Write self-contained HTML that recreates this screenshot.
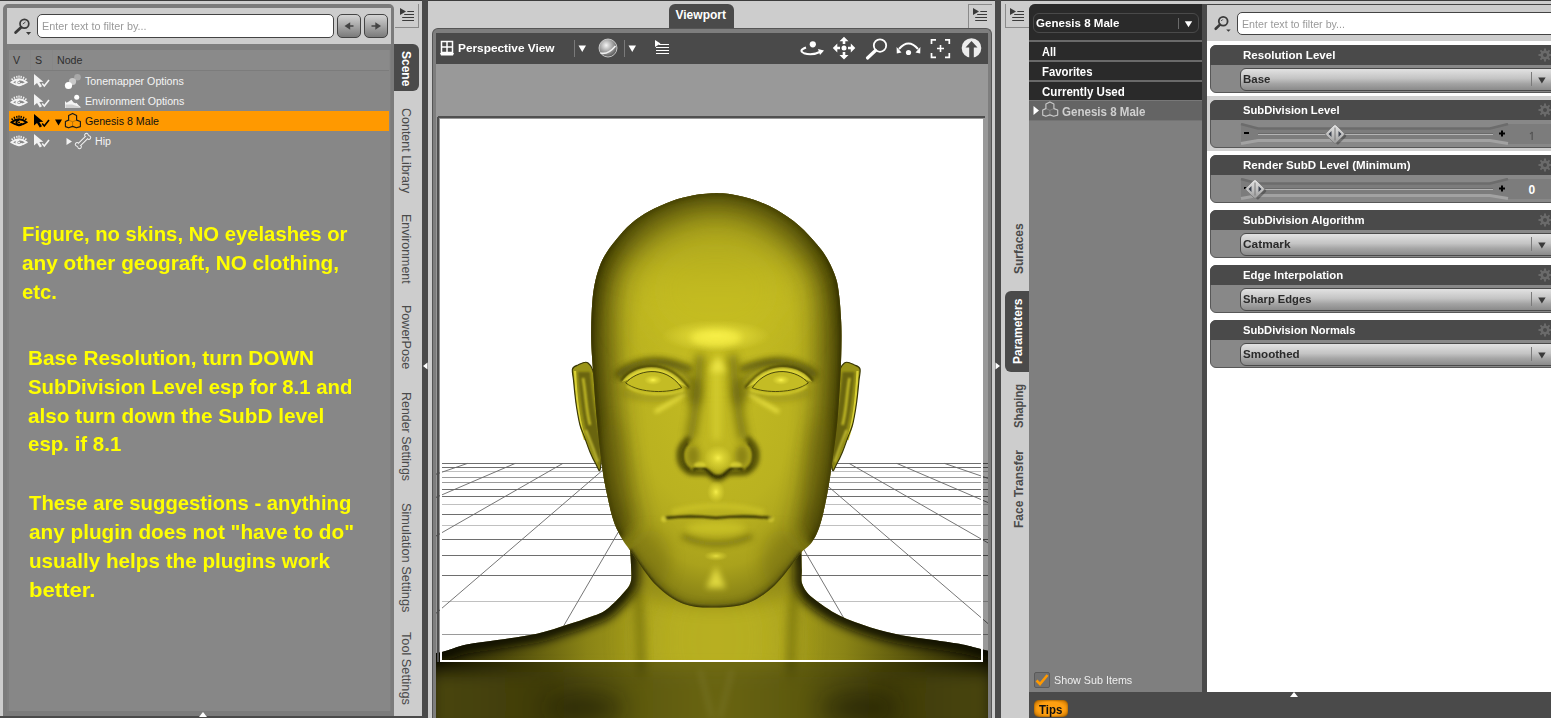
<!DOCTYPE html>
<html><head><meta charset="utf-8">
<style>
*{margin:0;padding:0;box-sizing:border-box}
html,body{width:1551px;height:718px;overflow:hidden;background:#cdcdcd;font-family:"Liberation Sans",sans-serif;position:relative}
.a{position:absolute}
.vt{position:absolute;transform-origin:0 0;white-space:nowrap;font-size:12px;line-height:12px;color:#4a4a4a}
</style></head><body>
<div class="a" style="left:0;top:0;width:1551px;height:1px;background:#3c3c3c"></div>
<div class="a" style="left:422px;top:0;width:6px;height:718px;background:#4a4a4a"></div>
<div class="a" style="left:995px;top:0;width:6px;height:718px;background:#4a4a4a"></div>
<div class="a" style="left:0;top:716px;width:422px;height:2px;background:#4a4a4a"></div>
<!-- LEFT PANEL -->
<div class="a" style="left:3px;top:4px;width:391px;height:712px;background:#7b7b7b;border-radius:5px 5px 0 0"></div>
<div class="a" style="left:7px;top:8px;width:384px;height:36px;background:#cdcdcd"></div>
<div class="a" style="left:7px;top:44px;width:384px;height:667px;background:#7f7f7f"></div>
<div class="a" style="left:9px;top:50px;width:380.5px;height:661px;background:#878787"></div>
<!-- search icon -->
<svg class="a" style="left:8px;top:10px" width="30" height="30" viewBox="8 10 30 30">
 <circle cx="24.4" cy="23.7" r="4.4" fill="none" stroke="#3a3a3a" stroke-width="1.7"/>
 <path d="M25.5 22 L22.8 24" stroke="#3a3a3a" stroke-width="0.9"/>
 <path d="M21.2 27.3 L15.6 32.6" stroke="#3a3a3a" stroke-width="2.8" stroke-linecap="round"/>
 <path d="M26 32 L31.1 32 L28.55 35 Z" fill="#3a3a3a"/>
</svg>
<div class="a" style="left:37px;top:14px;width:297px;height:24px;background:#fff;border:1px solid #444;border-radius:5px"></div>
<div class="a" style="left:42px;top:20.5px;font-size:11px;line-height:11px;color:#9a9a9a;white-space:nowrap;transform:scaleX(0.985);transform-origin:0 0">Enter text to filter by...</div>
<div class="a" style="left:337px;top:14px;width:24px;height:24px;border:1px solid #444;border-radius:5px;background:linear-gradient(#d4d4d4,#7a7a7a)"></div>
<div class="a" style="left:364px;top:14px;width:24px;height:24px;border:1px solid #444;border-radius:5px;background:linear-gradient(#d4d4d4,#7a7a7a)"></div>
<svg class="a" style="left:337px;top:14px" width="51" height="24" viewBox="0 0 51 24">
 <path d="M7.5 12 L13.2 8.3 L13.2 15.7 Z" fill="#444"/><path d="M12 12 H16.5" stroke="#444" stroke-width="1.5"/>
 <path d="M44 12 L38.3 8.3 L38.3 15.7 Z" fill="#444"/><path d="M34.5 12 H39" stroke="#444" stroke-width="1.5"/>
</svg>
<!-- header -->
<div class="a" style="left:9px;top:50px;width:21px;height:20px;background:#8a8a8a"></div>
<div class="a" style="left:31px;top:50px;width:21px;height:20px;background:#8a8a8a"></div>
<div class="a" style="left:53px;top:50px;width:336px;height:20px;background:#8a8a8a"></div>
<div class="a" style="left:9px;top:70px;width:380px;height:1px;background:#7c7c7c"></div>
<div class="a" style="left:13px;top:54px;font-size:10.65px;color:#2e2e2e">V</div>
<div class="a" style="left:35px;top:54px;font-size:10.65px;color:#2e2e2e">S</div>
<div class="a" style="left:57px;top:54px;font-size:10.65px;color:#2e2e2e">Node</div>
<!-- selected row -->
<div class="a" style="left:9px;top:111px;width:380px;height:20px;background:#ff9900"></div>
<!-- rows text -->
<div class="a" style="left:85px;top:75px;font-size:10.65px;color:#f4f4f4;white-space:nowrap">Tonemapper Options</div>
<div class="a" style="left:85px;top:95px;font-size:10.65px;color:#f4f4f4;white-space:nowrap">Environment Options</div>
<div class="a" style="left:85px;top:115px;font-size:10.65px;color:#111;white-space:nowrap">Genesis 8 Male</div>
<div class="a" style="left:95px;top:135px;font-size:10.65px;color:#f4f4f4;white-space:nowrap">Hip</div>
<!-- icons -->
<svg class="a" style="left:0;top:70px" width="100" height="82" viewBox="0 70 100 82">
 <defs>
  <g id="eye">
   <path d="M0.5 8.8 Q8 2.8 15.5 8.8 Q8 14.2 0.5 8.8 Z" fill="none" stroke="currentColor" stroke-width="1.9"/>
   <path d="M8.3 6.6 A2.6 2.6 0 1 0 10.6 9.6" fill="none" stroke="currentColor" stroke-width="2"/>
   <circle cx="8" cy="8.9" r="1" fill="currentColor"/>
   <path d="M1.8 6.6 L0.6 5 M3.8 5.2 L3 3.2 M6 4.4 L5.7 2.3 M8 4.2 V2 M10 4.4 L10.3 2.3 M12.2 5.2 L13 3.2 M14.2 6.6 L15.4 5" stroke="currentColor" stroke-width="1.3"/>
  </g>
  <g id="cur">
   <path d="M0 0 L0 11.5 L3 9 L5.8 13.5 L8 12.3 L5.3 8 L9.3 7.8 Z" fill="currentColor"/>
   <path d="M8.2 9.5 L10.3 12 L15 6" fill="none" stroke="currentColor" stroke-width="1.6"/>
  </g>
 </defs>
 <g color="#f2f2f2"><use href="#eye" x="11" y="73.5"/><use href="#cur" x="34" y="74"/></g>
 <g color="#f2f2f2"><use href="#eye" x="11" y="93.5"/><use href="#cur" x="34" y="94"/></g>
 <g color="#000"><use href="#eye" x="11" y="113.5"/><use href="#cur" x="34" y="114"/></g>
 <g color="#f2f2f2"><use href="#eye" x="11" y="133.5"/><use href="#cur" x="34" y="134"/></g>
 <!-- tonemapper -->
 <circle cx="77.5" cy="77.3" r="3.3" fill="#a8a8a8"/><circle cx="72.5" cy="81.5" r="3.6" fill="#c8c8c8"/><circle cx="68.5" cy="85.5" r="3.6" fill="#fff"/>
 <!-- environment -->
 <path d="M65 101 L66.6 102.8 L68.3 101.8 L71.4 99.7 L73.6 102.4 L75.4 103.2 L76.6 103 L78.6 105.2 L80.4 106.8 L80.4 107.9 L65 107.9 Z" fill="#f4f4f4"/>
 <path d="M65.5 104.5 H72 L75 105.5 L78 106.3 L80 107 V107.9 H65.5 Z" fill="#cfcfcf"/>
 <circle cx="76.7" cy="97.2" r="2.5" fill="#fff"/>
 <!-- triangle -->
 <path d="M55 119.5 L62 119.5 L58.5 125.5 Z" fill="#000"/>
 <!-- figure -->
 <path d="M72.6 113.4 L76.6 115.5 L76.6 120.1 L80.4 121.5 L80.4 126.6 L76.4 127.8 L72.6 126.4 L68.6 127.8 L65.4 126.6 L65.4 121.5 L68.6 120.1 L68.6 115.5 Z" fill="none" stroke="#1a1a1a" stroke-width="1.15" stroke-linejoin="round"/><path d="M68.6 120.1 L72.6 121.8 L76.6 120.1 M72.6 121.8 V126.4" fill="none" stroke="#1a1a1a" stroke-width="0.8" opacity="0.35"/>
 <!-- hip triangle -->
 <path d="M66.5 138 L72 141.5 L66.5 145 Z" fill="#f2f2f2"/>
 <!-- bone -->
 <g transform="translate(83 141) rotate(-45) scale(0.87)">
  <g fill="#f4f4f4"><rect x="-7" y="-2.4" width="14" height="4.8"/><circle cx="-7.6" cy="-2" r="2.6"/><circle cx="-7.6" cy="2" r="2.6"/><circle cx="7.6" cy="-2" r="2.6"/><circle cx="7.6" cy="2" r="2.6"/></g>
  <g fill="#878787"><rect x="-7" y="-1.3" width="14" height="2.6"/><circle cx="-7.6" cy="-2" r="1.5"/><circle cx="-7.6" cy="2" r="1.5"/><circle cx="7.6" cy="-2" r="1.5"/><circle cx="7.6" cy="2" r="1.5"/><rect x="-8.5" y="-2" width="2" height="4"/><rect x="6.5" y="-2" width="2" height="4"/></g>
 </g>
</svg>
<!-- yellow note -->
<div class="a" style="left:22.2px;top:223.12px;font-size:21px;line-height:21px;font-weight:bold;color:#ffff00;white-space:nowrap;transform:scaleX(0.9650);transform-origin:0 0">Figure, no skins, NO eyelashes or</div>
<div class="a" style="left:22.2px;top:252.12px;font-size:21px;line-height:21px;font-weight:bold;color:#ffff00;white-space:nowrap;transform:scaleX(0.9880);transform-origin:0 0">any other geograft, NO clothing,</div>
<div class="a" style="left:21.5px;top:281.22px;font-size:21px;line-height:21px;font-weight:bold;color:#ffff00;white-space:nowrap;transform:scaleX(0.9672);transform-origin:0 0">etc.</div>
<div class="a" style="left:27.5px;top:346.52px;font-size:21px;line-height:21px;font-weight:bold;color:#ffff00;white-space:nowrap;transform:scaleX(0.9888);transform-origin:0 0">Base Resolution, turn DOWN</div>
<div class="a" style="left:27.5px;top:375.62px;font-size:21px;line-height:21px;font-weight:bold;color:#ffff00;white-space:nowrap;transform:scaleX(0.9683);transform-origin:0 0">SubDivision Level esp for 8.1 and</div>
<div class="a" style="left:27.5px;top:404.72px;font-size:21px;line-height:21px;font-weight:bold;color:#ffff00;white-space:nowrap;transform:scaleX(0.9884);transform-origin:0 0">also turn down the SubD level</div>
<div class="a" style="left:27.7px;top:433.42px;font-size:21px;line-height:21px;font-weight:bold;color:#ffff00;white-space:nowrap;transform:scaleX(0.9748);transform-origin:0 0">esp. if 8.1</div>
<div class="a" style="left:28.7px;top:492.12px;font-size:21px;line-height:21px;font-weight:bold;color:#ffff00;white-space:nowrap;transform:scaleX(0.9657);transform-origin:0 0">These are suggestions - anything</div>
<div class="a" style="left:28.7px;top:521.12px;font-size:21px;line-height:21px;font-weight:bold;color:#ffff00;white-space:nowrap;transform:scaleX(0.9875);transform-origin:0 0">any plugin does not &quot;have to do&quot;</div>
<div class="a" style="left:28.7px;top:550.12px;font-size:21px;line-height:21px;font-weight:bold;color:#ffff00;white-space:nowrap;transform:scaleX(0.9842);transform-origin:0 0">usually helps the plugins work</div>
<div class="a" style="left:29.1px;top:579.22px;font-size:21px;line-height:21px;font-weight:bold;color:#ffff00;white-space:nowrap;transform:scaleX(1.0520);transform-origin:0 0">better.</div>

<!-- left tab strip menu icon -->
<div class="a" style="left:394.7px;top:4px;width:24.2px;height:24px;border-right:1px solid #8a8a8a;border-bottom:1px solid #8a8a8a"></div>
<svg class="a" style="left:398px;top:6px" width="18" height="18" viewBox="398 6 18 18"><path d="M400 8 L400 15 L406 11.5 Z" fill="#3a3a3a"/><path d="M407.3 11.5 H414 M404.2 14.5 H414 M402.2 17.5 H414 M402.2 20.5 H414" stroke="#3a3a3a" stroke-width="1.1"/></svg>
<!-- Scene tab active -->
<div class="a" style="left:394px;top:44px;width:25px;height:47px;background:#4a4a4a;border-radius:0 6px 6px 0"></div>
<div class="vt" style="left:412px;top:51px;transform:rotate(90deg);font-weight:bold;color:#fff">Scene</div>
<div class="vt" style="left:412px;top:108px;transform:rotate(90deg) scaleX(1.04);">Content Library</div>
<div class="vt" style="left:412px;top:214.4px;transform:rotate(90deg) scaleX(1.035);">Environment</div>
<div class="vt" style="left:412px;top:305px;transform:rotate(90deg) scaleX(1.045);">PowerPose</div>
<div class="vt" style="left:412px;top:392px;transform:rotate(90deg) scaleX(1.035);">Render Settings</div>
<div class="vt" style="left:412px;top:503.3px;transform:rotate(90deg) scaleX(1.065);">Simulation Settings</div>
<div class="vt" style="left:412px;top:632px;transform:rotate(90deg) scaleX(1.06);">Tool Settings</div>
<svg class="a" style="left:422px;top:360px" width="6" height="12" viewBox="0 0 6 12"><path d="M1 6 L5.5 2.5 L5.5 9.5 Z" fill="#fff"/></svg>
<svg class="a" style="left:199px;top:711px" width="8" height="6" viewBox="0 0 8 6"><path d="M0 6 L4 1 L8 6 Z" fill="#fff"/></svg>

<!-- viewport tab strip menu icon -->
<div class="a" style="left:968px;top:4px;width:24px;height:24px;border-left:1px solid #8a8a8a;border-top:1px solid #8a8a8a"></div>
<svg class="a" style="left:971px;top:6px" width="18" height="18" viewBox="971 6 18 18"><path d="M973 8 L973 15 L979 11.5 Z" fill="#3a3a3a"/><path d="M980.3 11.5 H987 M977.2 14.5 H987 M975.2 17.5 H987 M975.2 20.5 H987" stroke="#3a3a3a" stroke-width="1.1"/></svg>
<!-- Viewport tab -->
<div class="a" style="left:669px;top:4px;width:65px;height:26px;background:#4a4a4a;border-radius:6px 6px 0 0"></div>
<div class="a" style="left:675.5px;top:9px;font-size:12px;line-height:12px;font-weight:bold;color:#fff">Viewport</div>

<!-- right tab strip menu icon -->
<div class="a" style="left:1005px;top:4px;width:25px;height:24px;border-left:1px solid #8a8a8a;border-bottom:1px solid #8a8a8a"></div>
<svg class="a" style="left:1008px;top:6px" width="18" height="18" viewBox="1008 6 18 18"><path d="M1010 8 L1010 15 L1016 11.5 Z" fill="#3a3a3a"/><path d="M1017.3 11.5 H1024 M1014.2 14.5 H1024 M1012.2 17.5 H1024 M1012.2 20.5 H1024" stroke="#3a3a3a" stroke-width="1.1"/></svg>
<!-- right vertical tabs -->
<div class="a" style="left:1005px;top:290.5px;width:25px;height:81px;background:#4a4a4a;border-radius:6px 0 0 6px"></div>
<div class="vt" style="left:1013px;top:274.4px;transform:rotate(-90deg);font-weight:bold;">Surfaces</div>
<div class="vt" style="left:1012px;top:364px;transform:rotate(-90deg);font-weight:bold;color:#fff">Parameters</div>
<div class="vt" style="left:1013px;top:428px;transform:rotate(-90deg) scaleX(0.93);font-weight:bold;">Shaping</div>
<div class="vt" style="left:1013px;top:528.4px;transform:rotate(-90deg);font-weight:bold;">Face Transfer</div>
<svg class="a" style="left:995px;top:360px" width="6" height="12" viewBox="0 0 6 12"><path d="M5 6 L0.5 2.5 L0.5 9.5 Z" fill="#fff"/></svg>
<!-- VIEWPORT -->
<div class="a" style="left:432px;top:28px;width:560px;height:690px;background:#7e7e7e;border-radius:6px 6px 0 0;border:1px solid #555;border-bottom:none"></div>
<div class="a" style="left:436px;top:33px;width:552px;height:31px;background:#4a4a4a"></div>
<svg class="a" style="left:0;top:0" width="1551" height="718" viewBox="0 0 1551 718">
<defs>
 <clipPath id="vpclip"><rect x="436" y="64" width="552" height="654"/></clipPath>
 <clipPath id="hclip"><path d="M716.0 193.0 C718.7 193.2 725.9 193.3 732.3 194.5 C738.7 195.7 747.2 197.4 754.6 200.0 C762.0 202.6 769.5 205.8 776.9 210.1 C784.3 214.4 792.4 219.9 799.1 225.7 C805.8 231.4 812.2 238.8 817.0 244.6 C821.8 250.3 825.0 254.6 828.1 260.2 C831.2 265.8 834.0 272.1 835.9 278.0 C837.8 283.9 838.4 289.2 839.2 295.9 C840.1 302.6 840.6 310.8 841.0 318.2 C841.4 325.6 841.6 330.6 841.5 340.0 C841.4 349.4 841.2 361.3 840.5 374.6 C839.8 387.9 838.8 405.8 837.5 420.0 C836.2 434.2 834.2 447.5 832.5 460.0 C830.8 472.5 829.1 484.2 827.0 495.0 C824.9 505.8 822.5 517.2 820.0 525.0 C817.5 532.8 815.1 537.5 812.0 542.0 C808.9 546.5 803.2 550.3 801.5 552.0 L801.5 552.0 C797.1 557.5 783.9 576.5 775.0 585.0 C766.1 593.5 757.8 599.2 748.0 603.0 C738.2 606.8 726.7 607.3 716.0 607.5 C705.3 607.7 694.0 607.8 684.0 604.0 C674.0 600.2 665.0 594.0 656.0 585.0 C647.0 576.0 634.2 555.8 629.8 550.0 L629.8 550.0 C628.3 547.8 623.9 542.4 621.0 537.0 C618.1 531.6 615.2 526.4 612.6 517.7 C610.0 509.1 607.0 494.7 605.1 485.1 C603.2 475.5 602.7 471.0 601.3 460.0 C599.9 449.0 598.2 434.2 596.8 419.2 C595.4 404.2 593.9 383.4 593.0 370.2 C592.1 357.0 591.4 349.4 591.2 340.0 C591.0 330.6 591.2 321.8 591.6 313.7 C592.0 305.6 592.4 298.4 593.4 291.4 C594.4 284.3 596.0 277.3 597.9 271.4 C599.8 265.5 601.6 261.0 604.6 255.8 C607.6 250.6 611.2 245.6 615.7 240.2 C620.2 234.8 625.7 228.3 631.3 223.5 C636.9 218.7 642.4 214.9 649.1 211.2 C655.8 207.5 664.0 203.9 671.4 201.2 C678.8 198.5 686.3 196.6 693.7 195.2 C701.1 193.8 712.3 193.4 716.0 193.0 Z"/></clipPath>
 <clipPath id="bclip"><path d="M801.5 548.0 C801.5 551.7 801.6 564.0 801.8 570.0 C801.9 576.0 800.6 579.6 802.4 584.2 C804.2 588.8 806.4 592.6 812.6 597.8 C818.8 603.0 829.7 610.6 839.4 615.6 C849.1 620.6 860.3 624.2 870.6 627.5 C880.9 630.8 891.0 633.2 901.2 635.2 C911.4 637.2 921.6 638.3 931.8 639.8 C942.0 641.3 954.2 642.9 962.4 644.4 C970.6 645.9 975.9 647.8 980.8 649.0 C985.7 650.2 990.1 651.1 992.0 651.5 L992 720 L430 720 L430.0 653.5 C432.0 653.2 435.9 653.5 442.0 652.0 C448.1 650.5 457.4 646.5 466.6 644.5 C475.8 642.5 485.6 641.8 497.3 640.0 C509.0 638.2 525.3 636.4 537.0 633.8 C548.7 631.2 558.9 627.4 567.7 624.6 C576.5 621.8 583.8 619.4 590.0 617.0 C596.2 614.6 599.8 614.3 605.1 610.5 C610.4 606.7 617.8 599.1 622.0 594.4 C626.2 589.7 629.1 587.4 630.6 582.5 C632.1 577.6 631.1 570.8 631.0 565.0 C630.9 559.2 630.0 550.8 629.8 548.0 Z"/></clipPath>
 <filter id="b07" filterUnits="userSpaceOnUse" x="380" y="100" width="700" height="650"><feGaussianBlur stdDeviation="0.7"/></filter><filter id="b1" filterUnits="userSpaceOnUse" x="380" y="100" width="700" height="650"><feGaussianBlur stdDeviation="1"/></filter><filter id="b2" filterUnits="userSpaceOnUse" x="380" y="100" width="700" height="650"><feGaussianBlur stdDeviation="2"/></filter><filter id="b3" filterUnits="userSpaceOnUse" x="380" y="100" width="700" height="650"><feGaussianBlur stdDeviation="3"/></filter><filter id="b5" filterUnits="userSpaceOnUse" x="380" y="100" width="700" height="650"><feGaussianBlur stdDeviation="5"/></filter><filter id="b8" filterUnits="userSpaceOnUse" x="380" y="100" width="700" height="650"><feGaussianBlur stdDeviation="8"/></filter><filter id="b12" filterUnits="userSpaceOnUse" x="380" y="100" width="700" height="650"><feGaussianBlur stdDeviation="12"/></filter><filter id="b20" filterUnits="userSpaceOnUse" x="380" y="100" width="700" height="650"><feGaussianBlur stdDeviation="20"/></filter>
 <radialGradient id="faceg" cx="716" cy="380" r="200" gradientUnits="userSpaceOnUse" gradientTransform="translate(716 380) scale(0.7 1.1) translate(-716 -380)">
  <stop offset="0" stop-color="#c4bc22"/><stop offset="0.6" stop-color="#bab220"/><stop offset="0.85" stop-color="#aaa21c"/><stop offset="1" stop-color="#8a8416"/>
 </radialGradient>
 <linearGradient id="shg" gradientUnits="userSpaceOnUse" x1="436" y1="0" x2="996" y2="0">
  <stop offset="0" stop-color="#1e1c02"/><stop offset="0.12" stop-color="#4a460a"/><stop offset="0.27" stop-color="#8a8416"/><stop offset="0.38" stop-color="#a8a01c"/>
  <stop offset="0.5" stop-color="#b8b020"/><stop offset="0.62" stop-color="#a8a01c"/><stop offset="0.73" stop-color="#8a8416"/><stop offset="0.88" stop-color="#4a460a"/><stop offset="1" stop-color="#1e1c02"/>
 </linearGradient>
 <linearGradient id="chg" gradientUnits="userSpaceOnUse" x1="436" y1="0" x2="996" y2="0">
  <stop offset="0" stop-color="#7a7414"/><stop offset="0.2" stop-color="#6a6410"/><stop offset="0.35" stop-color="#9a9418"/><stop offset="0.5" stop-color="#b0a81e"/>
  <stop offset="0.65" stop-color="#9a9418"/><stop offset="0.8" stop-color="#6a6410"/><stop offset="1" stop-color="#7a7414"/>
 </linearGradient>
 <radialGradient id="hl" cx="0.5" cy="0.5" r="0.5"><stop offset="0" stop-color="#fcf450" stop-opacity="1"/><stop offset="0.4" stop-color="#f0e840" stop-opacity="0.6"/><stop offset="1" stop-color="#e8e040" stop-opacity="0"/></radialGradient>
</defs>
<g clip-path="url(#vpclip)">
 <rect x="436" y="64" width="552" height="654" fill="#fff"/>
 <g stroke="#5a5a5a" stroke-width="1" fill="none" shape-rendering="crispEdges"><path d="M442 463.5 H988" stroke="#6e6e6e"/><path d="M442 467.5 H988" stroke="#6e6e6e"/><path d="M442 471.5 H988" stroke="#c0c0c0"/><path d="M442 477.5 H988" stroke="#9a9a9a"/><path d="M442 482.5 H988" stroke="#9a9a9a"/><path d="M442 489.5 H988" stroke="#6e6e6e"/><path d="M442 496.5 H988" stroke="#6e6e6e"/><path d="M442 504.5 H988" stroke="#c0c0c0"/><path d="M442 514.5 H988" stroke="#6e6e6e"/><path d="M442 525.5 H988" stroke="#c0c0c0"/><path d="M442 539.5 H988" stroke="#6e6e6e"/><path d="M442 555.5 H988" stroke="#6e6e6e"/><path d="M442 575.5 H988" stroke="#6e6e6e"/><path d="M442 601.5 H988" stroke="#c0c0c0"/><path d="M442 634.5 H988" stroke="#9a9a9a"/><path d="M442 676.5 H988" stroke="#6e6e6e"/></g>
 <g stroke="#666" stroke-width="0.9" fill="none"><path d="M419.80 463.4 L-476.89 720"/><path d="M467.50 463.4 L-279.74 720"/><path d="M515.20 463.4 L-82.59 720"/><path d="M562.90 463.4 L114.55 720"/><path d="M610.60 463.4 L311.70 720"/><path d="M658.30 463.4 L508.85 720"/><path d="M706.00 463.4 L706.00 720"/><path d="M753.70 463.4 L903.15 720"/><path d="M801.40 463.4 L1100.30 720"/><path d="M849.10 463.4 L1297.45 720"/><path d="M896.80 463.4 L1494.59 720"/><path d="M944.50 463.4 L1691.74 720"/><path d="M992.20 463.4 L1888.89 720"/></g>
 <!-- ears -->
 <g id="earL">
  <path d="M588.0 363.0 C585.2 360.5 580.6 364.0 578.0 365.0 C575.4 366.0 573.2 366.5 572.5 369.0 C571.8 371.5 573.1 375.7 573.5 380.0 C573.9 384.3 574.5 390.3 575.0 395.0 C575.5 399.7 575.9 403.0 576.7 408.0 C577.5 413.0 578.7 420.2 580.0 425.0 C581.3 429.8 582.8 432.5 584.5 437.0 C586.2 441.5 588.1 447.5 590.0 452.0 C591.9 456.5 594.0 460.9 595.7 463.8 C597.4 466.7 599.3 473.4 600.2 469.4 C601.1 465.4 601.9 454.9 601.0 440.0 C600.1 425.1 597.2 392.8 595.0 380.0 C592.8 367.2 590.8 365.5 588.0 363.0 Z" fill="#9a9418"/>
  <path d="M578 372 C580 395 582 420 590 445 C594 455 598 462 600 468 L601 445 C596 420 592 395 590 372 Z" fill="#5e5a0c" filter="url(#b1)" opacity="0.8"/>
  <path d="M575 371 C576 395 578 420 585 440" stroke="#d8d034" stroke-width="2.2" fill="none" filter="url(#b07)"/>
  <path d="M583 378 C586 395 586 410 590 425" stroke="#c8c028" stroke-width="2.5" fill="none" filter="url(#b1)"/>
  <path d="M586 430 C590 440 594 450 598 462" stroke="#e8e040" stroke-width="2" fill="none" filter="url(#b1)" opacity="0.8"/>
  <path d="M588.0 363.0 C585.2 360.5 580.6 364.0 578.0 365.0 C575.4 366.0 573.2 366.5 572.5 369.0 C571.8 371.5 573.1 375.7 573.5 380.0 C573.9 384.3 574.5 390.3 575.0 395.0 C575.5 399.7 575.9 403.0 576.7 408.0 C577.5 413.0 578.7 420.2 580.0 425.0 C581.3 429.8 582.8 432.5 584.5 437.0 C586.2 441.5 588.1 447.5 590.0 452.0 C591.9 456.5 594.0 460.9 595.7 463.8 C597.4 466.7 599.3 473.4 600.2 469.4 C601.1 465.4 601.9 454.9 601.0 440.0 C600.1 425.1 597.2 392.8 595.0 380.0 C592.8 367.2 590.8 365.5 588.0 363.0 Z" fill="none" stroke="#3a3806" stroke-width="1.2"/>
 </g>
 <use href="#earL" transform="translate(1432.5 0) scale(-1 1)"/>
 <!-- body -->
 <g clip-path="url(#bclip)">
  <rect x="430" y="540" width="562" height="180" fill="url(#shg)"/>
  <ellipse cx="716" cy="640" rx="70" ry="90" fill="#b8b020" filter="url(#b20)" opacity="0.8"/>
  <path d="M801.5 548.0 C801.5 551.7 801.6 564.0 801.8 570.0 C801.9 576.0 800.6 579.6 802.4 584.2 C804.2 588.8 806.4 592.6 812.6 597.8 C818.8 603.0 829.7 610.6 839.4 615.6 C849.1 620.6 860.3 624.2 870.6 627.5 C880.9 630.8 891.0 633.2 901.2 635.2 C911.4 637.2 921.6 638.3 931.8 639.8 C942.0 641.3 954.2 642.9 962.4 644.4 C970.6 645.9 975.9 647.8 980.8 649.0 C985.7 650.2 990.1 651.1 992.0 651.5" fill="none" stroke="#0e0c00" stroke-width="18" filter="url(#b5)" opacity="0.9"/>
  <path d="M430.0 653.5 C432.0 653.2 435.9 653.5 442.0 652.0 C448.1 650.5 457.4 646.5 466.6 644.5 C475.8 642.5 485.6 641.8 497.3 640.0 C509.0 638.2 525.3 636.4 537.0 633.8 C548.7 631.2 558.9 627.4 567.7 624.6 C576.5 621.8 583.8 619.4 590.0 617.0 C596.2 614.6 599.8 614.3 605.1 610.5 C610.4 606.7 617.8 599.1 622.0 594.4 C626.2 589.7 629.1 587.4 630.6 582.5 C632.1 577.6 631.1 570.8 631.0 565.0 C630.9 559.2 630.0 550.8 629.8 548.0" fill="none" stroke="#0e0c00" stroke-width="18" filter="url(#b5)" opacity="0.9"/>
  <path d="M637 590 Q643 640 640 720" stroke="#5a560c" stroke-width="6" fill="none" filter="url(#b5)" opacity="0.7"/>
  <path d="M795 590 Q789 640 792 720" stroke="#5a560c" stroke-width="6" fill="none" filter="url(#b5)" opacity="0.7"/>
  <path d="M630 590 Q716 625 802 590 L802 560 L630 560 Z" fill="#6a640f" filter="url(#b8)" opacity="0.35"/>
  <!-- chest area below frame -->
  <rect x="430" y="672" width="562" height="60" fill="url(#chg)" filter="url(#b8)"/>
  <ellipse cx="585" cy="708" rx="40" ry="14" fill="#1e1c02" filter="url(#b12)" opacity="0.5"/>
  <ellipse cx="860" cy="708" rx="40" ry="14" fill="#1e1c02" filter="url(#b12)" opacity="0.5"/>
  <path d="M700 670 L712 718 M732 670 L720 718" stroke="#e8e070" stroke-width="4" fill="none" filter="url(#b3)" opacity="0.35"/>
 </g>
 <!-- head -->
 <g clip-path="url(#hclip)">
  <rect x="580" y="180" width="270" height="440" fill="url(#faceg)"/>
  <path d="M621.0 537.0 C619.6 533.8 615.2 526.4 612.6 517.7 C610.0 509.1 607.0 494.7 605.1 485.1 C603.2 475.5 602.7 471.0 601.3 460.0 C599.9 449.0 598.2 434.2 596.8 419.2 C595.4 404.2 593.9 383.4 593.0 370.2 C592.1 357.0 591.4 349.4 591.2 340.0 C591.0 330.6 591.2 321.8 591.6 313.7 C592.0 305.6 592.4 298.4 593.4 291.4 C594.4 284.3 596.0 277.3 597.9 271.4 C599.8 265.5 601.6 261.0 604.6 255.8 C607.6 250.6 611.2 245.6 615.7 240.2 C620.2 234.8 625.7 228.3 631.3 223.5 C636.9 218.7 642.4 214.9 649.1 211.2 C655.8 207.5 664.0 203.9 671.4 201.2 C678.8 198.5 686.3 196.6 693.7 195.2 C701.1 193.8 709.6 193.1 716.0 193.0 C722.4 192.9 725.9 193.3 732.3 194.5 C738.7 195.7 747.2 197.4 754.6 200.0 C762.0 202.6 769.5 205.8 776.9 210.1 C784.3 214.4 792.4 219.9 799.1 225.7 C805.8 231.4 812.2 238.8 817.0 244.6 C821.8 250.3 825.0 254.6 828.1 260.2 C831.2 265.8 834.0 272.1 835.9 278.0 C837.8 283.9 838.4 289.2 839.2 295.9 C840.1 302.6 840.6 310.8 841.0 318.2 C841.4 325.6 841.6 330.6 841.5 340.0 C841.4 349.4 841.2 361.3 840.5 374.6 C839.8 387.9 838.8 405.8 837.5 420.0 C836.2 434.2 834.2 447.5 832.5 460.0 C830.8 472.5 829.1 484.2 827.0 495.0 C824.9 505.8 822.5 517.2 820.0 525.0 C817.5 532.8 813.3 539.2 812.0 542.0" fill="none" stroke="#2a2804" stroke-width="44" filter="url(#b12)" opacity="0.6"/>
  <path d="M621.0 537.0 C619.6 533.8 615.2 526.4 612.6 517.7 C610.0 509.1 607.0 494.7 605.1 485.1 C603.2 475.5 602.7 471.0 601.3 460.0 C599.9 449.0 598.2 434.2 596.8 419.2 C595.4 404.2 593.9 383.4 593.0 370.2 C592.1 357.0 591.4 349.4 591.2 340.0 C591.0 330.6 591.2 321.8 591.6 313.7 C592.0 305.6 592.4 298.4 593.4 291.4 C594.4 284.3 596.0 277.3 597.9 271.4 C599.8 265.5 601.6 261.0 604.6 255.8 C607.6 250.6 611.2 245.6 615.7 240.2 C620.2 234.8 625.7 228.3 631.3 223.5 C636.9 218.7 642.4 214.9 649.1 211.2 C655.8 207.5 664.0 203.9 671.4 201.2 C678.8 198.5 686.3 196.6 693.7 195.2 C701.1 193.8 709.6 193.1 716.0 193.0 C722.4 192.9 725.9 193.3 732.3 194.5 C738.7 195.7 747.2 197.4 754.6 200.0 C762.0 202.6 769.5 205.8 776.9 210.1 C784.3 214.4 792.4 219.9 799.1 225.7 C805.8 231.4 812.2 238.8 817.0 244.6 C821.8 250.3 825.0 254.6 828.1 260.2 C831.2 265.8 834.0 272.1 835.9 278.0 C837.8 283.9 838.4 289.2 839.2 295.9 C840.1 302.6 840.6 310.8 841.0 318.2 C841.4 325.6 841.6 330.6 841.5 340.0 C841.4 349.4 841.2 361.3 840.5 374.6 C839.8 387.9 838.8 405.8 837.5 420.0 C836.2 434.2 834.2 447.5 832.5 460.0 C830.8 472.5 829.1 484.2 827.0 495.0 C824.9 505.8 822.5 517.2 820.0 525.0 C817.5 532.8 813.3 539.2 812.0 542.0" fill="none" stroke="#2a2804" stroke-width="4" filter="url(#b2)" opacity="0.9"/>
  <path d="M621.0 537.0 C619.6 533.8 615.2 526.4 612.6 517.7 C610.0 509.1 607.0 494.7 605.1 485.1 C603.2 475.5 602.7 471.0 601.3 460.0 C599.9 449.0 598.2 434.2 596.8 419.2 C595.4 404.2 593.9 383.4 593.0 370.2 C592.1 357.0 591.4 349.4 591.2 340.0 C591.0 330.6 591.2 321.8 591.6 313.7 C592.0 305.6 592.4 298.4 593.4 291.4 C594.4 284.3 596.0 277.3 597.9 271.4 C599.8 265.5 601.6 261.0 604.6 255.8 C607.6 250.6 611.2 245.6 615.7 240.2 C620.2 234.8 625.7 228.3 631.3 223.5 C636.9 218.7 642.4 214.9 649.1 211.2 C655.8 207.5 664.0 203.9 671.4 201.2 C678.8 198.5 686.3 196.6 693.7 195.2 C701.1 193.8 709.6 193.1 716.0 193.0 C722.4 192.9 725.9 193.3 732.3 194.5 C738.7 195.7 747.2 197.4 754.6 200.0 C762.0 202.6 769.5 205.8 776.9 210.1 C784.3 214.4 792.4 219.9 799.1 225.7 C805.8 231.4 812.2 238.8 817.0 244.6 C821.8 250.3 825.0 254.6 828.1 260.2 C831.2 265.8 834.0 272.1 835.9 278.0 C837.8 283.9 838.4 289.2 839.2 295.9 C840.1 302.6 840.6 310.8 841.0 318.2 C841.4 325.6 841.6 330.6 841.5 340.0 C841.4 349.4 841.2 361.3 840.5 374.6 C839.8 387.9 838.8 405.8 837.5 420.0 C836.2 434.2 834.2 447.5 832.5 460.0 C830.8 472.5 829.1 484.2 827.0 495.0 C824.9 505.8 822.5 517.2 820.0 525.0 C817.5 532.8 813.3 539.2 812.0 542.0" fill="none" stroke="#3a3806" stroke-width="14" filter="url(#b5)" opacity="0.5"/>
  <path d="M801.5 552.0 C797.1 557.5 783.9 576.5 775.0 585.0 C766.1 593.5 757.8 599.2 748.0 603.0 C738.2 606.8 726.7 607.3 716.0 607.5 C705.3 607.7 694.0 607.8 684.0 604.0 C674.0 600.2 665.0 594.0 656.0 585.0 C647.0 576.0 634.2 555.8 629.8 550.0" fill="none" stroke="#4a460a" stroke-width="8" filter="url(#b3)" opacity="0.6"/>
  <ellipse cx="716" cy="225" rx="120" ry="45" fill="#5a560c" filter="url(#b20)" opacity="0.35"/>
  <!-- forehead glow -->
  <ellipse cx="716" cy="290" rx="85" ry="70" fill="#c8c024" filter="url(#b20)" opacity="0.6"/>
  <ellipse cx="716" cy="336" rx="55" ry="16" fill="url(#hl)" opacity="1"/>
  <ellipse cx="716" cy="338" rx="25" ry="8" fill="#f4ec44" filter="url(#b3)" opacity="0.8"/>
  <!-- temples darker -->
  <ellipse cx="612" cy="480" rx="14" ry="60" fill="#6a640f" filter="url(#b8)" opacity="0.35"/>
  <ellipse cx="820" cy="480" rx="14" ry="60" fill="#6a640f" filter="url(#b8)" opacity="0.35"/>
  <!-- brow ridge shadow -->
  <path d="M616 376 Q650 352 692 370" stroke="#4a460a" stroke-width="7" fill="none" filter="url(#b3)" opacity="0.8"/>
  <path d="M816 376 Q782 352 740 370" stroke="#4a460a" stroke-width="7" fill="none" filter="url(#b3)" opacity="0.8"/>
  <path d="M622 392 Q650 405 688 392" stroke="#7a7412" stroke-width="4" fill="none" filter="url(#b3)" opacity="0.6"/>
  <path d="M810 392 Q782 405 744 392" stroke="#7a7412" stroke-width="4" fill="none" filter="url(#b3)" opacity="0.6"/>
  <!-- cheek highlights -->
  <path d="M686 394 Q672 402 655 412" stroke="#f4ec48" stroke-width="4" fill="none" filter="url(#b2)" opacity="0.75"/>
  <path d="M748 394 Q762 402 779 412" stroke="#f4ec48" stroke-width="4" fill="none" filter="url(#b2)" opacity="0.75"/>
  <ellipse cx="694" cy="392" rx="7" ry="14" fill="#5a560c" filter="url(#b5)" opacity="0.55"/>
  <ellipse cx="740" cy="392" rx="7" ry="14" fill="#5a560c" filter="url(#b5)" opacity="0.55"/>
  <!-- eyelids -->
  <g id="eyeLg">
   <path d="M622 382 C630 366, 666 356, 688 388 C670 378, 645 372, 622 382 Z" fill="#dcd434" filter="url(#b07)"/>
   <path d="M621 381 C630 365, 666 355, 689 388" fill="none" stroke="#2a2804" stroke-width="2.2" filter="url(#b1)" opacity="0.75"/>
   <path d="M618 377 C630 359, 668 349, 693 384" fill="none" stroke="#5a560c" stroke-width="5" filter="url(#b3)" opacity="0.6"/>
   <path d="M625.7 382.9 C636 371, 664 363, 681.7 387.7 C670 393, 640 394, 625.7 382.9 Z" fill="#c4bc24" stroke="#3a3806" stroke-width="0.9"/>
   <ellipse cx="653" cy="380" rx="9" ry="5" fill="url(#hl)"/>
   <path d="M627 386 C640 396, 668 396, 684 390" fill="none" stroke="#e0d838" stroke-width="2" filter="url(#b1)" opacity="0.8"/>
  </g>
  <use href="#eyeLg" transform="translate(1434 0) scale(-1 1)"/>
  <!-- nose bridge -->
  <path d="M700 355 Q698 400 690 440" stroke="#5a560c" stroke-width="8" fill="none" filter="url(#b5)" opacity="0.75"/>
  <path d="M733 355 Q735 400 744 440" stroke="#5a560c" stroke-width="8" fill="none" filter="url(#b5)" opacity="0.75"/>
  <path d="M716.5 362 L716.5 440" stroke="#d8d030" stroke-width="9" fill="none" filter="url(#b3)" opacity="0.7"/>
  <path d="M718 355 L710 372 L726 372 Z" fill="#f0e848" filter="url(#b3)" opacity="0.9"/>
  <!-- nose wings -->
  <path d="M690 438 C676 446 676 466 690 472 C700 474 706 470 712 476 C716 479 720 479 724 476 C730 470 736 474 746 472 C760 466 760 446 746 438" fill="none" stroke="#3a3806" stroke-width="6" filter="url(#b2)" opacity="0.8"/>
  <ellipse cx="693" cy="456" rx="7" ry="11" fill="#6a640f" filter="url(#b3)" opacity="0.6"/>
  <ellipse cx="742" cy="456" rx="7" ry="11" fill="#6a640f" filter="url(#b3)" opacity="0.6"/>
  <path d="M688 443 C680 450 681 464 690 470" stroke="#1e1c02" stroke-width="2" fill="none" filter="url(#b1)" opacity="0.7"/>
  <path d="M748 443 C756 450 755 464 746 470" stroke="#1e1c02" stroke-width="2" fill="none" filter="url(#b1)" opacity="0.7"/>
  <path d="M693 470 C700 466 706 468 711 474 C716 478 720 478 725 474 C730 468 736 466 743 470" stroke="#1e1c02" stroke-width="2" fill="none" filter="url(#b1)"/>
  <ellipse cx="700" cy="465" rx="6" ry="3" fill="#e0d838" filter="url(#b1)" opacity="0.7"/>
  <ellipse cx="736" cy="465" rx="6" ry="3" fill="#e0d838" filter="url(#b1)" opacity="0.7"/>
  <ellipse cx="718" cy="458" rx="14" ry="13" fill="url(#hl)" opacity="0.9"/>
  <!-- philtrum -->
  <ellipse cx="716" cy="492" rx="9" ry="11" fill="url(#hl)" opacity="0.9"/>
  <!-- lips -->
  <path d="M665 518 Q690 515 716 518 Q742 515 772 518" stroke="#2a2804" stroke-width="2.3" fill="none" filter="url(#b1)"/>
  <path d="M672 512 Q716 500 764 512" stroke="#d0c82a" stroke-width="5" fill="none" filter="url(#b2)" opacity="0.7"/>
  <path d="M682 536 Q716 552 752 536" stroke="#5a560c" stroke-width="5" fill="none" filter="url(#b3)" opacity="0.65"/>
  <ellipse cx="716" cy="528" rx="30" ry="6" fill="#d4cc2c" filter="url(#b3)" opacity="0.6"/>
  <ellipse cx="664" cy="519" rx="3" ry="3" fill="#e8e040" filter="url(#b1)" opacity="0.6"/>
  <ellipse cx="771" cy="519" rx="3" ry="3" fill="#e8e040" filter="url(#b1)" opacity="0.6"/>
  <ellipse cx="650" cy="560" rx="20" ry="30" fill="#6a640f" filter="url(#b8)" opacity="0.4"/>
  <ellipse cx="782" cy="560" rx="20" ry="30" fill="#6a640f" filter="url(#b8)" opacity="0.4"/>
  <!-- chin highlights -->
  <path d="M716 566 L726 588 L706 588 Z" fill="#f0e848" filter="url(#b3)" opacity="0.8"/>
  <ellipse cx="716" cy="556" rx="12" ry="5" fill="url(#hl)" opacity="0.7"/>
  <!-- jaw edge -->
  <path d="M801.5 552.0 C797.1 557.5 783.9 576.5 775.0 585.0 C766.1 593.5 757.8 599.2 748.0 603.0 C738.2 606.8 726.7 607.3 716.0 607.5 C705.3 607.7 694.0 607.8 684.0 604.0 C674.0 600.2 665.0 594.0 656.0 585.0 C647.0 576.0 634.2 555.8 629.8 550.0" fill="none" stroke="#2a2804" stroke-width="2.2" filter="url(#b1)"/>
 </g>
 <!-- camera frame overlay -->
 <path d="M436 64 H988 V718 H436 Z M440 119 V662 H983 V119 Z" fill="#000" fill-opacity="0.4" fill-rule="evenodd"/>
 <path d="M438 117 H985 M438 117 V662" stroke="#4f4f4f" stroke-width="2" fill="none"/>
 <rect x="441" y="120" width="541" height="541" fill="none" stroke="#fff" stroke-width="2"/>
</g>
</svg>

<!-- toolbar icons -->
<svg class="a" style="left:436px;top:33px" width="552" height="31" viewBox="436 33 552 31">
 <!-- window icon -->
 <g fill="none" stroke="#fff" stroke-width="1.5">
  <rect x="441.5" y="41.5" width="11" height="11"/>
  <path d="M447 41.5 V52.5 M441.5 47 H452.5"/>
 </g>
 <path d="M440 53 H454 L453 55.5 H441 Z" fill="#fff"/>
 <!-- separators -->
 <path d="M574.5 40 V57 M624.5 40 V57" stroke="#7a7a7a" stroke-width="1"/>
 <path d="M578.5 45.5 H586 L582.25 52 Z M628.5 45.5 H636 L632.25 52 Z" fill="#fff"/>
 <!-- sphere -->
 <defs><radialGradient id="sph" cx="0.4" cy="0.35" r="0.65"><stop offset="0" stop-color="#f4f4f4"/><stop offset="0.6" stop-color="#9a9a9a"/><stop offset="1" stop-color="#5a5a5a"/></radialGradient></defs>
 <circle cx="608" cy="48" r="9" fill="url(#sph)" stroke="#ddd" stroke-width="0.8"/>
 <path d="M600.5 53 Q608 55 615.5 46" stroke="#f0f0f0" stroke-width="1.6" fill="none"/>
 <!-- menu icon -->
 <path d="M655 40 V47 L660.5 43.5 Z" fill="#fff"/>
 <path d="M659 44.5 H669 M656 47.5 H669 M656 50.5 H669 M656 53.5 H669" stroke="#fff" stroke-width="1.2"/>
 <!-- orbit -->
 <circle cx="812.8" cy="44.3" r="3.1" fill="#fff"/>
 <path d="M806 47.5 Q798 50.5 804 53.2 Q812 56 821 51.5" stroke="#fff" stroke-width="2" fill="none"/>
 <path d="M818 49 L824 50.5 L820 55 Z" fill="#fff"/>
 <!-- move -->
 <g fill="#fff">
  <circle cx="844" cy="48" r="2.5"/>
  <path d="M844 36.7 L848.5 41.2 L845.3 41.2 L845.3 44 L842.7 44 L842.7 41.2 L839.5 41.2 Z"/>
  <path d="M844 59.4 L848.5 54.9 L845.3 54.9 L845.3 52 L842.7 52 L842.7 54.9 L839.5 54.9 Z"/>
  <path d="M832.8 48 L837.3 43.5 L837.3 46.7 L840 46.7 L840 49.3 L837.3 49.3 L837.3 52.5 Z"/>
  <path d="M855.3 48 L850.8 43.5 L850.8 46.7 L848 46.7 L848 49.3 L850.8 49.3 L850.8 52.5 Z"/>
 </g>
 <!-- zoom -->
 <circle cx="880" cy="45.6" r="6.2" fill="none" stroke="#fff" stroke-width="1.8"/>
 <path d="M875.5 50.5 L867.5 58" stroke="#fff" stroke-width="3.2" stroke-linecap="round"/>
 <!-- arc -->
 <path d="M899 49 Q908.5 38 918 49" stroke="#fff" stroke-width="2" fill="none"/>
 <path d="M896.6 47 L901.5 52.5 L896.8 53.5 Z M920.4 47 L915.5 52.5 L920.2 53.5 Z" fill="#fff"/>
 <circle cx="908.5" cy="52.5" r="2.6" fill="#fff"/>
 <!-- frame -->
 <path d="M931.5 44 V39.8 H936 M945 39.8 H949.3 V44 M931.5 53 V57.3 H936 M945 57.3 H949.3 V53" stroke="#fff" stroke-width="1.7" fill="none"/>
 <path d="M937 48.5 H944 M940.5 45 V52" stroke="#fff" stroke-width="1.6"/>
 <!-- up circle -->
 <circle cx="971.5" cy="48" r="9.8" fill="#ececec"/>
 <path d="M971.5 41 L977.5 47.5 L973.8 47.5 L973.8 58 L969.2 58 L969.2 47.5 L965.5 47.5 Z" fill="#4a4a4a"/>
</svg>
<div class="a" style="left:458.4px;top:42.2px;font-size:11.5px;line-height:12px;font-weight:bold;color:#fff;white-space:nowrap;transform:scaleX(1.03);transform-origin:0 0">Perspective View</div>
<!-- RIGHT PANEL -->
<div class="a" style="left:1029px;top:4px;width:173px;height:714px;background:#7f7f7f;border-radius:6px 0 0 0;overflow:hidden">
 <div class="a" style="left:0;top:0;width:173px;height:96px;background:#2a2a2a"></div>
</div>
<div class="a" style="left:1202px;top:4px;width:5px;height:714px;background:#4a4a4a"></div>
<div class="a" style="left:1207px;top:4px;width:344px;height:37px;background:#cdcdcd;border-top:1px solid #454545"></div>
<div class="a" style="left:1207px;top:41px;width:344px;height:651px;background:#ffffff"></div>
<div class="a" style="left:1029px;top:691.5px;width:522px;height:26.5px;background:#4a4a4a"></div>
<!-- combo -->
<div class="a" style="left:1033px;top:13px;width:166px;height:20px;border:1px solid #4a4a4a;border-radius:6px"></div>
<div class="a" style="left:1178px;top:18px;width:1px;height:11px;background:#6a6a6a"></div>
<svg class="a" style="left:1184px;top:20px" width="9" height="8" viewBox="0 0 9 8"><path d="M0.8 1.2 H8.2 L4.5 7.2 Z" fill="#fff"/></svg>
<div class="a" style="left:1036.3px;top:17.87px;font-size:11.5px;line-height:11.5px;font-weight:bold;color:#fff;white-space:nowrap;transform:scaleX(1.0048);transform-origin:0 0;">Genesis 8 Male</div>
<div class="a" style="left:1029px;top:40px;width:173px;height:1.5px;background:#6a6a6a"></div>
<div class="a" style="left:1029px;top:60px;width:173px;height:1.5px;background:#6a6a6a"></div>
<div class="a" style="left:1029px;top:80px;width:173px;height:1.5px;background:#6a6a6a"></div>
<div class="a" style="left:1029px;top:99.5px;width:173px;height:1.5px;background:#787878"></div>
<div class="a" style="left:1029px;top:101px;width:173px;height:19px;background:#646464"></div>
<div class="a" style="left:1029px;top:120px;width:173px;height:1px;background:#747474"></div>
<div class="a" style="left:1042.2px;top:46.14px;font-size:12px;line-height:12px;font-weight:bold;color:#fff;white-space:nowrap;transform:scaleX(0.9130);transform-origin:0 0;">All</div>
<div class="a" style="left:1042.2px;top:66.04px;font-size:12px;line-height:12px;font-weight:bold;color:#fff;white-space:nowrap;transform:scaleX(0.9465);transform-origin:0 0;">Favorites</div>
<div class="a" style="left:1042.2px;top:85.94px;font-size:12px;line-height:12px;font-weight:bold;color:#fff;white-space:nowrap;transform:scaleX(0.9626);transform-origin:0 0;">Currently Used</div>
<div class="a" style="left:1062.1px;top:105.84px;font-size:12px;line-height:12px;font-weight:bold;color:#cfcfcf;white-space:nowrap;transform:scaleX(0.9630);transform-origin:0 0;">Genesis 8 Male</div>
<svg class="a" style="left:1029px;top:100px" width="35" height="20" viewBox="1029 100 35 20">
 <path d="M1033.5 106 L1039 110.5 L1033.5 115 Z" fill="#fff"/>
 <path d="M1049.9 101.9 L1053.9 104.0 L1053.9 108.6 L1057.7 110.0 L1057.7 115.1 L1053.7 116.3 L1049.9 114.9 L1045.9 116.3 L1042.7 115.1 L1042.7 110.0 L1045.9 108.6 L1045.9 104.0 Z" fill="none" stroke="#c8c8c8" stroke-width="1.15" stroke-linejoin="round"/><path d="M1045.9 108.6 L1049.9 110.3 L1053.9 108.6 M1049.9 110.3 V114.9" fill="none" stroke="#c8c8c8" stroke-width="0.8" opacity="0.4"/>
</svg>
<!-- show sub items -->
<div class="a" style="left:1034px;top:672px;width:15.5px;height:15.5px;background:#707070;border:1px solid #5a5a5a;border-radius:2px"></div>
<svg class="a" style="left:1034px;top:672px" width="16" height="16" viewBox="0 0 16 16"><path d="M2.5 8.5 L6 12 L13.5 3" stroke="#ff9900" stroke-width="2.6" fill="none"/></svg>
<div class="a" style="left:1054.4px;top:674.59px;font-size:11px;line-height:11px;font-weight:normal;color:#eeeeee;white-space:nowrap;transform:scaleX(0.9764);transform-origin:0 0;">Show Sub Items</div>
<div class="a" style="left:1034px;top:700px;width:34px;height:17px;border-radius:5px;background:radial-gradient(ellipse at 50% 50%,#ff9f10 55%,#b86a00 100%);box-shadow:inset 0 0 2px #6a4000"></div>
<div class="a" style="left:1039.3px;top:703.74px;font-size:12px;line-height:12px;font-weight:bold;color:#111;white-space:nowrap;transform:scaleX(0.9530);transform-origin:0 0;">Tips</div>
<svg class="a" style="left:1289px;top:691px" width="10" height="6" viewBox="0 0 10 6"><path d="M1 6 L5 1 L9 6 Z" fill="#fff"/></svg>
<svg class="a" style="left:1212px;top:13px" width="22" height="22" viewBox="0 0 22 22">
 <circle cx="11.2" cy="8.3" r="4.4" fill="none" stroke="#3a3a3a" stroke-width="1.8"/>
 <path d="M10.7 6.5 L9.2 8" stroke="#3a3a3a" stroke-width="1"/>
 <path d="M8 11.6 L3.7 15.8" stroke="#3a3a3a" stroke-width="2.6" stroke-linecap="round"/>
 <path d="M14.2 16.5 L18.7 16.5 L16.45 18.8 Z" fill="#3a3a3a"/>
</svg>
<div class="a" style="left:1237px;top:11.5px;width:330px;height:23.5px;background:#fff;border:1px solid #444;border-radius:5px"></div>
<div class="a" style="left:1242px;top:18.89px;font-size:11px;line-height:11px;font-weight:normal;color:#9a9a9a;white-space:nowrap;transform:scaleX(0.9702);transform-origin:0 0;">Enter text to filter by...</div>
<div class="a" style="left:1207px;top:96px;width:344px;height:54.5px;background:#d0d0d0"></div>
<div class="a" style="left:1210px;top:45px;width:360px;height:48px;background:#888;border:1px solid #585858;border-radius:6px"></div>
<div class="a" style="left:1210px;top:45px;width:360px;height:20px;background:#4a4a4a;border-radius:6px 6px 0 0"></div>
<svg class="a" style="left:1538px;top:48px" width="14" height="14" viewBox="0 0 14 14"><g fill="#6a6a6a"><circle cx="7" cy="7" r="4.6"/><path d="M6 0.5 H8 V13.5 H6 Z M0.5 6 H13.5 V8 H0.5 Z" /><path d="M6 0.5 H8 V13.5 H6 Z M0.5 6 H13.5 V8 H0.5 Z" transform="rotate(45 7 7)"/></g><circle cx="7" cy="7" r="2" fill="#4a4a4a"/></svg>
<div class="a" style="left:1242.5px;top:49.97px;font-size:11.5px;line-height:11.5px;font-weight:bold;color:#fff;white-space:nowrap;transform:scaleX(1.0042);transform-origin:0 0;">Resolution Level</div>
<div class="a" style="left:1240px;top:67.5px;width:330px;height:23px;border:1px solid #4a4a4a;border-radius:6px;background:linear-gradient(#e2e2e2 0%,#c4c4c4 45%,#a4a4a4 70%,#8a8a8a 100%)"></div>
<div class="a" style="left:1531px;top:72px;width:1px;height:14px;background:#7a7a7a"></div>
<svg class="a" style="left:1538px;top:76.5px" width="8" height="7" viewBox="0 0 8 7"><path d="M0.2 0.5 H7.6 L3.9 6.5 Z" fill="#3a3a3a"/></svg>
<div class="a" style="left:1243.3px;top:73.87px;font-size:11.5px;line-height:11.5px;font-weight:bold;color:#2a2a2a;white-space:nowrap;transform:scaleX(0.9967);transform-origin:0 0;">Base</div>
<div class="a" style="left:1210px;top:100px;width:360px;height:48px;background:#888;border:1px solid #585858;border-radius:6px"></div>
<div class="a" style="left:1210px;top:100px;width:360px;height:20px;background:#4a4a4a;border-radius:6px 6px 0 0"></div>
<svg class="a" style="left:1538px;top:103px" width="14" height="14" viewBox="0 0 14 14"><g fill="#6a6a6a"><circle cx="7" cy="7" r="4.6"/><path d="M6 0.5 H8 V13.5 H6 Z M0.5 6 H13.5 V8 H0.5 Z" /><path d="M6 0.5 H8 V13.5 H6 Z M0.5 6 H13.5 V8 H0.5 Z" transform="rotate(45 7 7)"/></g><circle cx="7" cy="7" r="2" fill="#4a4a4a"/></svg>
<div class="a" style="left:1242.5px;top:104.97px;font-size:11.5px;line-height:11.5px;font-weight:bold;color:#fff;white-space:nowrap;transform:scaleX(0.9742);transform-origin:0 0;">SubDivision Level</div>
<svg class="a" style="left:1240px;top:123px" width="311" height="22" viewBox="0 0 311 22"><path d="M1 1 L18 5.5 H250 L268 1 H311 V21 H268 L250 16.5 H18 L1 21 Z" fill="#7c7c7c"/><path d="M1 1 L18 5.5 H250 L268 1" stroke="#6c6c6c" stroke-width="2.5" fill="none"/><path d="M1 20.5 L18 17.5 H250 L268 20.5" stroke="#a2a2a2" stroke-width="3" fill="none"/><path d="M18 10.5 H253" stroke="#6a6a6a" stroke-width="1"/><path d="M18 11.5 H253" stroke="#b4b4b4" stroke-width="1"/><path d="M4 10 H9" stroke="#000" stroke-width="2"/><path d="M259 10.5 H265 M262 7.5 V13.5" stroke="#000" stroke-width="2"/></svg>
<svg class="a" style="left:1323px;top:122.5px" width="24" height="25" viewBox="0 0 24 25"><defs><linearGradient id="th1" x1="0" y1="0" x2="0" y2="1"><stop offset="0" stop-color="#e4e4e4"/><stop offset="0.5" stop-color="#c4c4c4"/><stop offset="1" stop-color="#9a9a9a"/></linearGradient></defs><path d="M13 3.5 Q14 2.5 15 3.5 L22 10.5 Q23 11.5 22 12.5 L15 19.5 Q14 20.5 13 19.5 L6 12.5 Q5 11.5 6 10.5 Z" fill="#333" opacity="0.45" transform="translate(0.8 1.5)"/><path d="M11 2 Q12 1 13 2 L21 10 Q22 11 21 12 L13 20 Q12 21 11 20 L3 12 Q2 11 3 10 Z" fill="url(#th1)" stroke="#7a7a7a" stroke-width="0.8"/><path d="M12 4.5 V17.5" stroke="#777" stroke-width="1"/><path d="M8.5 8 L5.5 11 L8.5 14 Z M15.5 8 L18.5 11 L15.5 14 Z" fill="#3e4450"/></svg>
<svg class="a" style="left:1529px;top:131px" width="6" height="10" viewBox="0 0 6 10"><path d="M3.2 1 V9" stroke="#555" stroke-width="1.3"/><path d="M1 3 L3.4 1" stroke="#555" stroke-width="1.1"/></svg><div class="a" style="left:1210px;top:155px;width:360px;height:48px;background:#888;border:1px solid #585858;border-radius:6px"></div>
<div class="a" style="left:1210px;top:155px;width:360px;height:20px;background:#4a4a4a;border-radius:6px 6px 0 0"></div>
<svg class="a" style="left:1538px;top:158px" width="14" height="14" viewBox="0 0 14 14"><g fill="#6a6a6a"><circle cx="7" cy="7" r="4.6"/><path d="M6 0.5 H8 V13.5 H6 Z M0.5 6 H13.5 V8 H0.5 Z" /><path d="M6 0.5 H8 V13.5 H6 Z M0.5 6 H13.5 V8 H0.5 Z" transform="rotate(45 7 7)"/></g><circle cx="7" cy="7" r="2" fill="#4a4a4a"/></svg>
<div class="a" style="left:1242.5px;top:159.97px;font-size:11.5px;line-height:11.5px;font-weight:bold;color:#fff;white-space:nowrap;transform:scaleX(1.0050);transform-origin:0 0;">Render SubD Level (Minimum)</div>
<svg class="a" style="left:1240px;top:178px" width="311" height="22" viewBox="0 0 311 22"><path d="M1 1 L18 5.5 H250 L268 1 H311 V21 H268 L250 16.5 H18 L1 21 Z" fill="#7c7c7c"/><path d="M1 1 L18 5.5 H250 L268 1" stroke="#6c6c6c" stroke-width="2.5" fill="none"/><path d="M1 20.5 L18 17.5 H250 L268 20.5" stroke="#a2a2a2" stroke-width="3" fill="none"/><path d="M18 10.5 H253" stroke="#6a6a6a" stroke-width="1"/><path d="M18 11.5 H253" stroke="#b4b4b4" stroke-width="1"/><path d="M4 10 H9" stroke="#000" stroke-width="2"/><path d="M259 10.5 H265 M262 7.5 V13.5" stroke="#000" stroke-width="2"/></svg>
<svg class="a" style="left:1242.5px;top:177.5px" width="24" height="25" viewBox="0 0 24 25"><defs><linearGradient id="th2" x1="0" y1="0" x2="0" y2="1"><stop offset="0" stop-color="#e4e4e4"/><stop offset="0.5" stop-color="#c4c4c4"/><stop offset="1" stop-color="#9a9a9a"/></linearGradient></defs><path d="M13 3.5 Q14 2.5 15 3.5 L22 10.5 Q23 11.5 22 12.5 L15 19.5 Q14 20.5 13 19.5 L6 12.5 Q5 11.5 6 10.5 Z" fill="#333" opacity="0.45" transform="translate(0.8 1.5)"/><path d="M11 2 Q12 1 13 2 L21 10 Q22 11 21 12 L13 20 Q12 21 11 20 L3 12 Q2 11 3 10 Z" fill="url(#th2)" stroke="#7a7a7a" stroke-width="0.8"/><path d="M12 4.5 V17.5" stroke="#777" stroke-width="1"/><path d="M8.5 8 L5.5 11 L8.5 14 Z M15.5 8 L18.5 11 L15.5 14 Z" fill="#3e4450"/></svg>
<div class="a" style="left:1528.5px;top:184.34px;font-size:12px;line-height:12px;font-weight:bold;color:#fff;white-space:nowrap;transform:scaleX(1.0000);transform-origin:0 0;">0</div>
<div class="a" style="left:1210px;top:210px;width:360px;height:48px;background:#888;border:1px solid #585858;border-radius:6px"></div>
<div class="a" style="left:1210px;top:210px;width:360px;height:20px;background:#4a4a4a;border-radius:6px 6px 0 0"></div>
<svg class="a" style="left:1538px;top:213px" width="14" height="14" viewBox="0 0 14 14"><g fill="#6a6a6a"><circle cx="7" cy="7" r="4.6"/><path d="M6 0.5 H8 V13.5 H6 Z M0.5 6 H13.5 V8 H0.5 Z" /><path d="M6 0.5 H8 V13.5 H6 Z M0.5 6 H13.5 V8 H0.5 Z" transform="rotate(45 7 7)"/></g><circle cx="7" cy="7" r="2" fill="#4a4a4a"/></svg>
<div class="a" style="left:1242.5px;top:214.97px;font-size:11.5px;line-height:11.5px;font-weight:bold;color:#fff;white-space:nowrap;transform:scaleX(0.9845);transform-origin:0 0;">SubDivision Algorithm</div>
<div class="a" style="left:1240px;top:232.5px;width:330px;height:23px;border:1px solid #4a4a4a;border-radius:6px;background:linear-gradient(#e2e2e2 0%,#c4c4c4 45%,#a4a4a4 70%,#8a8a8a 100%)"></div>
<div class="a" style="left:1531px;top:237px;width:1px;height:14px;background:#7a7a7a"></div>
<svg class="a" style="left:1538px;top:241.5px" width="8" height="7" viewBox="0 0 8 7"><path d="M0.2 0.5 H7.6 L3.9 6.5 Z" fill="#3a3a3a"/></svg>
<div class="a" style="left:1243.3px;top:238.87px;font-size:11.5px;line-height:11.5px;font-weight:bold;color:#2a2a2a;white-space:nowrap;transform:scaleX(1.0322);transform-origin:0 0;">Catmark</div>
<div class="a" style="left:1210px;top:265px;width:360px;height:48px;background:#888;border:1px solid #585858;border-radius:6px"></div>
<div class="a" style="left:1210px;top:265px;width:360px;height:20px;background:#4a4a4a;border-radius:6px 6px 0 0"></div>
<svg class="a" style="left:1538px;top:268px" width="14" height="14" viewBox="0 0 14 14"><g fill="#6a6a6a"><circle cx="7" cy="7" r="4.6"/><path d="M6 0.5 H8 V13.5 H6 Z M0.5 6 H13.5 V8 H0.5 Z" /><path d="M6 0.5 H8 V13.5 H6 Z M0.5 6 H13.5 V8 H0.5 Z" transform="rotate(45 7 7)"/></g><circle cx="7" cy="7" r="2" fill="#4a4a4a"/></svg>
<div class="a" style="left:1242.5px;top:269.97px;font-size:11.5px;line-height:11.5px;font-weight:bold;color:#fff;white-space:nowrap;transform:scaleX(0.9926);transform-origin:0 0;">Edge Interpolation</div>
<div class="a" style="left:1240px;top:287.5px;width:330px;height:23px;border:1px solid #4a4a4a;border-radius:6px;background:linear-gradient(#e2e2e2 0%,#c4c4c4 45%,#a4a4a4 70%,#8a8a8a 100%)"></div>
<div class="a" style="left:1531px;top:292px;width:1px;height:14px;background:#7a7a7a"></div>
<svg class="a" style="left:1538px;top:296.5px" width="8" height="7" viewBox="0 0 8 7"><path d="M0.2 0.5 H7.6 L3.9 6.5 Z" fill="#3a3a3a"/></svg>
<div class="a" style="left:1243.3px;top:293.87px;font-size:11.5px;line-height:11.5px;font-weight:bold;color:#2a2a2a;white-space:nowrap;transform:scaleX(0.9730);transform-origin:0 0;">Sharp Edges</div>
<div class="a" style="left:1210px;top:320px;width:360px;height:48px;background:#888;border:1px solid #585858;border-radius:6px"></div>
<div class="a" style="left:1210px;top:320px;width:360px;height:20px;background:#4a4a4a;border-radius:6px 6px 0 0"></div>
<svg class="a" style="left:1538px;top:323px" width="14" height="14" viewBox="0 0 14 14"><g fill="#6a6a6a"><circle cx="7" cy="7" r="4.6"/><path d="M6 0.5 H8 V13.5 H6 Z M0.5 6 H13.5 V8 H0.5 Z" /><path d="M6 0.5 H8 V13.5 H6 Z M0.5 6 H13.5 V8 H0.5 Z" transform="rotate(45 7 7)"/></g><circle cx="7" cy="7" r="2" fill="#4a4a4a"/></svg>
<div class="a" style="left:1242.5px;top:324.97px;font-size:11.5px;line-height:11.5px;font-weight:bold;color:#fff;white-space:nowrap;transform:scaleX(0.9718);transform-origin:0 0;">SubDivision Normals</div>
<div class="a" style="left:1240px;top:342.5px;width:330px;height:23px;border:1px solid #4a4a4a;border-radius:6px;background:linear-gradient(#e2e2e2 0%,#c4c4c4 45%,#a4a4a4 70%,#8a8a8a 100%)"></div>
<div class="a" style="left:1531px;top:347px;width:1px;height:14px;background:#7a7a7a"></div>
<svg class="a" style="left:1538px;top:351.5px" width="8" height="7" viewBox="0 0 8 7"><path d="M0.2 0.5 H7.6 L3.9 6.5 Z" fill="#3a3a3a"/></svg>
<div class="a" style="left:1243.3px;top:348.87px;font-size:11.5px;line-height:11.5px;font-weight:bold;color:#2a2a2a;white-space:nowrap;transform:scaleX(1.0085);transform-origin:0 0;">Smoothed</div>
</body></html>
